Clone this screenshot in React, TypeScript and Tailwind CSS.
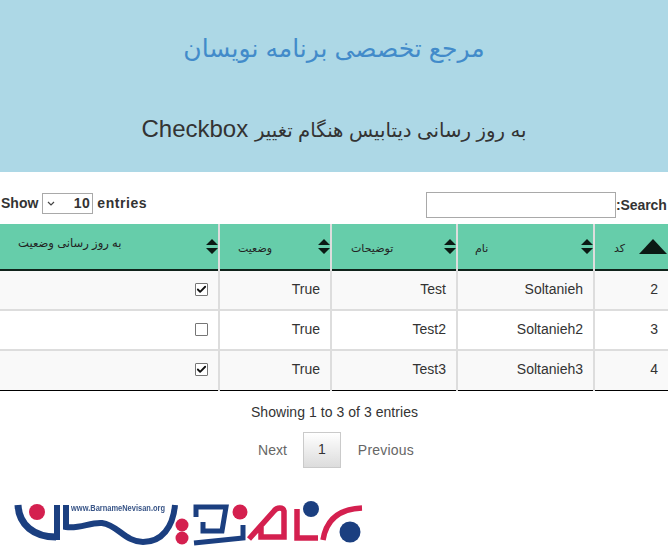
import { Check } from "lucide-react";

const rows = [
  { id: 2, name: "Soltanieh", desc: "Test", status: "True", done: true, odd: true },
  { id: 3, name: "Soltanieh2", desc: "Test2", status: "True", done: false, odd: false },
  { id: 4, name: "Soltanieh3", desc: "Test3", status: "True", done: true, odd: true },
];

const SortIcon = () => (
  <svg viewBox="0 0 12 15" className="absolute right-0 top-[15px] h-[15px] w-[12px]">
    <path d="M6 0 L12 6 H0 Z M0 9 H12 L6 15 Z" fill="#0b1a14" />
  </svg>
);

const Logo = () => (
  <svg viewBox="0 0 380 53" className="block h-[53px] w-[380px] blur-[0.4px]">
    <g fill="none" stroke="#1b3f80" strokeWidth="6">
      <path d="M18 10 C19 30 34 42 56 42" strokeWidth="7" />
      <path d="M57 10 V45" />
      <path d="M66 10 V32 C80 34 90 27 102 28 C118 30 125 47 143 47 C162 47 173 32 175 10" />
      <path d="M196 22 V12 H226 L222 36 H203 V27" strokeWidth="5" />
      <path d="M194 48 L243 43 V30" strokeWidth="5" />
    </g>
    <g fill="none" stroke="#d4204f" strokeWidth="5.5">
      <path d="M249 44 L274 16 C277 12 283 12 284 16 V42 H261 V32" />
      <path d="M297 14 V43 H318" />
      <path d="M323 45 C326 26 338 14 362 13" />
    </g>
    <circle cx="37" cy="17" r="8" fill="#d4204f" />
    <circle cx="182" cy="30" r="6.5" fill="#d4204f" />
    <circle cx="182" cy="43" r="6.5" fill="#d4204f" />
    <circle cx="240" cy="17" r="7.5" fill="#d4204f" />
    <circle cx="311" cy="14" r="8" fill="#1b3f80" />
    <circle cx="350" cy="37" r="10.5" fill="#1b3f80" />
    <text
      x="71"
      y="16"
      fontSize="9"
      fontWeight="700"
      fill="#3a5688"
      textLength="94"
      lengthAdjust="spacingAndGlyphs"
      fontFamily="'Liberation Sans', sans-serif"
    >
      www.BarnameNevisan.org
    </text>
  </svg>
);

const App = () => {
  return (
    <div className="h-[548px] w-[668px] overflow-hidden bg-white font-['Liberation_Sans','DejaVu_Sans',sans-serif] text-[14px] text-[#333]">
      <div className="flex h-[172px] flex-col items-center bg-[#add8e6] pt-[31px]">
        <h1 dir="rtl" className="text-[25px] leading-[34px] text-[#428bca]">
          مرجع تخصصی برنامه نویسان
        </h1>
        <h2 dir="rtl" className="mt-[47px] text-[24px] leading-[34px]">
          <span className="text-[19.7px]">به روز رسانی دیتابیس هنگام تغییر</span> Checkbox
        </h2>
      </div>

      <div className="flex h-[52px] items-start justify-between pt-[20px]">
        <div className="flex items-center pl-[1px] font-bold">
          <span className="pt-[1px]">Show</span>
          <div className="mx-[4px] flex h-[21px] w-[51px] items-center justify-between border border-[#a9a9a9] pl-[4px] pr-[2px] font-bold">
            <svg viewBox="0 0 8 5" className="h-[5px] w-[8px]">
              <path d="M1 1 L4 4 L7 1" fill="none" stroke="#444" strokeWidth="1.2" />
            </svg>
            <span className="tracking-[0.5px]">10</span>
          </div>
          <span className="pt-[1px] tracking-[0.55px]">entries</span>
        </div>
        <div className="flex items-center font-bold">
          <div className="h-[26px] w-[190px] border border-[#a9a9a9]" />
          <span className="w-[52px] whitespace-nowrap leading-[26px] tracking-[-0.1px]">:Search</span>
        </div>
      </div>

      <table className="w-[668px] table-fixed border-collapse">
        <colgroup>
          <col className="w-[219px]" />
          <col className="w-[112px]" />
          <col className="w-[126px]" />
          <col className="w-[137px]" />
          <col className="w-[74px]" />
        </colgroup>
        <thead>
          <tr className="h-[46px] border-b-[2px] border-[#10231b] bg-[#66cdaa] text-[11px] font-normal text-[#222]">
            <th className="relative border-r-2 border-[#ddd] pb-[7px] pl-[18px] pr-[70px] text-left text-[11.6px] font-normal">
              <span dir="rtl" className="whitespace-nowrap">به روز رسانی وضعیت</span>
              <SortIcon />
            </th>
            <th className="relative border-r-2 border-[#ddd] pl-[18px] pt-[4px] text-left font-normal">
              <span dir="rtl">وضعیت</span>
              <SortIcon />
            </th>
            <th className="relative border-r-2 border-[#ddd] pl-[19px] pt-[4px] text-left font-normal">
              <span dir="rtl">توضیحات</span>
              <SortIcon />
            </th>
            <th className="relative border-r-2 border-[#ddd] pl-[17px] pt-[4px] text-left font-normal">
              <span dir="rtl">نام</span>
              <SortIcon />
            </th>
            <th className="relative pl-[19px] pt-[4px] text-left font-normal">
              <span dir="rtl">کد</span>
              <svg viewBox="0 0 28 15" className="absolute right-[1px] top-[15px] h-[15px] w-[28px]">
                <path d="M14 0 L28 15 H0 Z" fill="#0b1a14" />
              </svg>
            </th>
          </tr>
        </thead>
        <tbody>
          {rows.map((row) => (
            <tr
              key={row.id}
              className={`h-[40px] border-b-2 border-[#ddd] text-right last:border-b last:border-black ${row.odd ? "bg-[#f9f9f9]" : "bg-white"}`}
            >
              <td className="border-r-2 border-[#ddd] pb-[2px] pr-[10px]">
                <div className="flex justify-end">
                  <span className="flex h-[13px] w-[13px] items-center justify-center rounded-[1px] border border-[#767676] bg-white">
                    {row.done ? <Check size={11} strokeWidth={4} color="#111" /> : null}
                  </span>
                </div>
              </td>
              <td className="border-r-2 border-[#ddd] pb-[2px] pr-[10px]">{row.status}</td>
              <td className="border-r-2 border-[#ddd] pb-[2px] pr-[10px]">{row.desc}</td>
              <td className="border-r-2 border-[#ddd] pb-[2px] pr-[10px]">{row.name}</td>
              <td className="pb-[2px] pr-[10px]">{row.id}</td>
            </tr>
          ))}
        </tbody>
      </table>

      <div className="pl-[1px] pt-[13px] text-center leading-[16px] tracking-[0.05px]">Showing 1 to 3 of 3 entries</div>
      <div className="mt-[12px] flex items-center justify-center pl-[4px] text-[#666]">
        <span className="mr-[16px] pt-[1px]">Next</span>
        <span className="flex h-[36px] w-[38px] items-center justify-center border border-[#cacaca] bg-gradient-to-b from-white to-[#dcdcdc] text-[#333]">
          1
        </span>
        <span className="ml-[17px] pt-[1px] tracking-[0.2px]">Previous</span>
      </div>
      <div className="mt-[27px]">
        <Logo />
      </div>
    </div>
  );
};

export default App;
